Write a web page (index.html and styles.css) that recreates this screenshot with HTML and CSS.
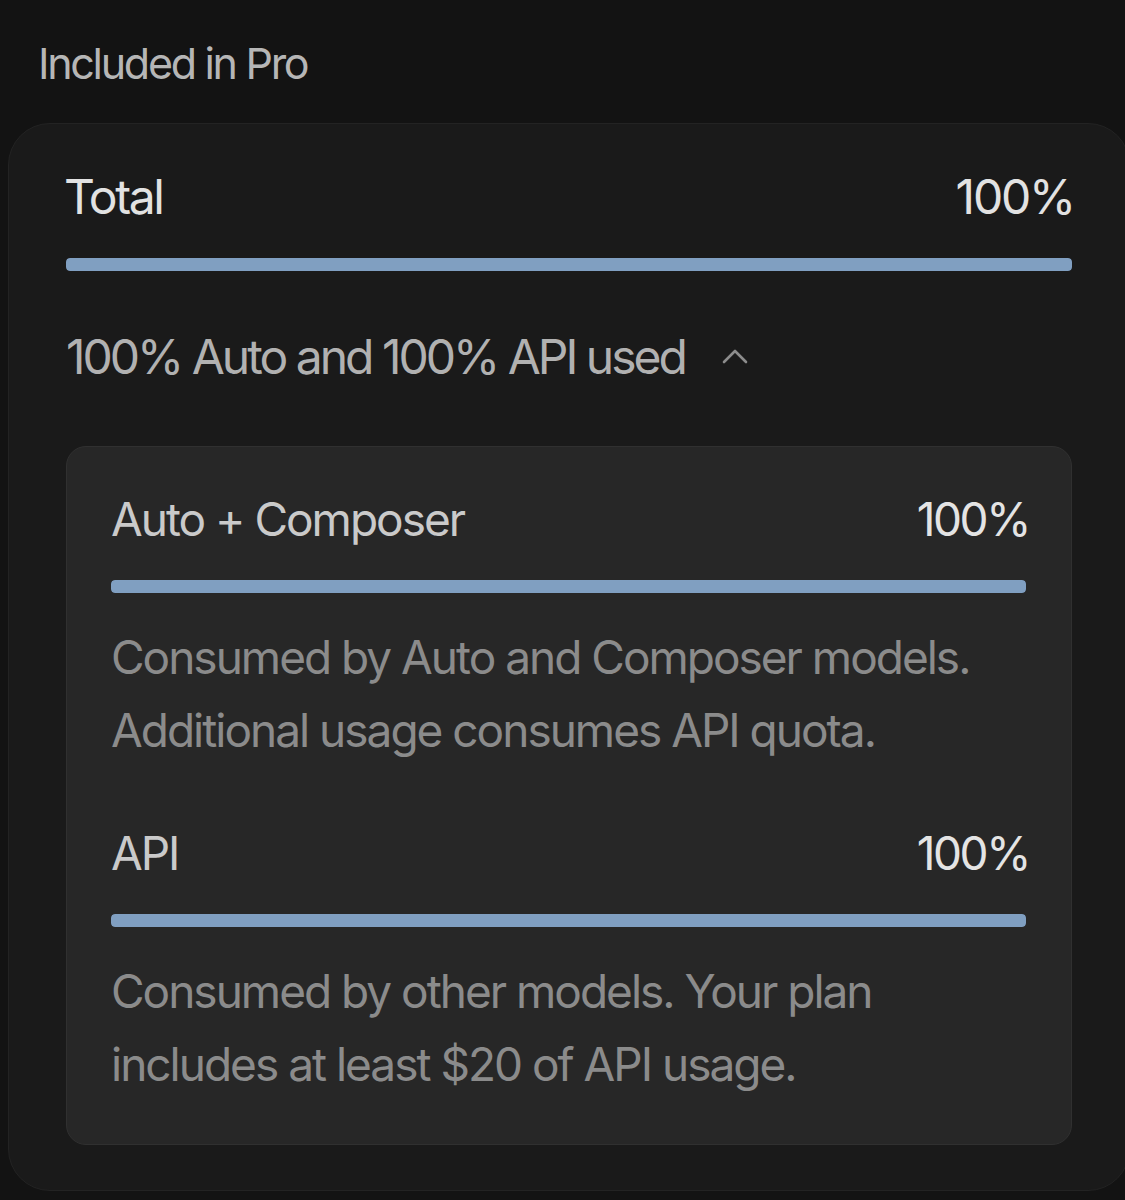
FILE: index.html
```html
<!DOCTYPE html>
<html lang="en">
<head>
<meta charset="utf-8">
<title>Included in Pro</title>
<link rel="stylesheet" href="styles.css">
</head>
<body>
<main class="page">
  <h2 class="section-title">Included in Pro</h2>
  <section class="card">
    <div class="row row-total">
      <span class="row-label">Total</span>
      <span class="row-value">100%</span>
    </div>
    <div class="bar"><div class="bar-fill" style="width:100%"></div></div>
    <button class="summary" type="button">
      <span>100% Auto and 100% API used</span>
      <svg class="chevron" width="26" height="16" viewBox="0 0 26 16" aria-hidden="true">
        <path d="M2 14 L13 3 L24 14" fill="none" stroke="#8c8c8c" stroke-width="2.6" stroke-linecap="round" stroke-linejoin="round"/>
      </svg>
    </button>
    <div class="detail">
      <div class="row row-sub">
        <span class="row-label">Auto + Composer</span>
        <span class="row-value">100%</span>
      </div>
      <div class="bar"><div class="bar-fill" style="width:100%"></div></div>
      <p class="desc">Consumed by Auto and Composer models.<br>Additional usage consumes API quota.</p>
      <div class="row row-sub row-api">
        <span class="row-label">API</span>
        <span class="row-value">100%</span>
      </div>
      <div class="bar"><div class="bar-fill" style="width:100%"></div></div>
      <p class="desc">Consumed by other models. Your plan<br>includes at least $20 of API usage.</p>
    </div>
  </section>
</main>
</body>
</html>
```
FILE: styles.css
```css
html, body {
  margin: 0;
  padding: 0;
  background: #131313;
  overflow: hidden;
}
body {
  font-family: Inter, "Noto Sans", "Liberation Sans", sans-serif;
  font-weight: 380;
  -webkit-font-smoothing: antialiased;
}
.page {
  padding: 37px 0 0 8px;
  width: 1122px;
}
.section-title {
  margin: 0 0 34px 30px;
  font-size: 43px;
  line-height: 52px;
  font-weight: 380;
  color: #b6b6b6;
  letter-spacing: -2.3px;
}
.card {
  box-sizing: border-box;
  width: 1122px;
  background: #1a1a1a;
  border: 1px solid #232323;
  border-radius: 42px;
  padding: 44px 57px 45px 57px;
  display: flex;
  flex-direction: column;
}
.row {
  display: flex;
  justify-content: space-between;
  align-items: baseline;
}
.row-total {
  font-size: 48px;
  line-height: 58px;
  color: #e2e2e2;
  letter-spacing: -2.4px;
}
.row-total .row-label {
  margin-left: -2px;
}
.row-total .row-value {
  margin-right: -2px;
  letter-spacing: -2.2px;
}
.bar {
  height: 13px;
  border-radius: 4px;
  background: #2e3640;
  overflow: hidden;
  margin-top: 32px;
}
.bar-fill {
  height: 100%;
  background: #809fc1;
  border-radius: 4px;
}
.summary {
  all: unset;
  display: flex;
  align-items: center;
  gap: 37px;
  margin-top: 57px;
  font-family: Inter, "Noto Sans", "Liberation Sans", sans-serif;
  font-weight: 380;
  font-size: 48px;
  line-height: 58px;
  color: #b1b1b1;
  letter-spacing: -3.0px;
  cursor: pointer;
}
.chevron {
  display: block;
  margin-top: -2px;
}
.detail {
  margin-top: 60px;
  background: #272727;
  border: 1px solid #303030;
  border-radius: 20px;
  padding: 44px 45px 43px 44px;
  display: flex;
  flex-direction: column;
}
.row-sub {
  font-size: 46px;
  line-height: 56px;
  color: #cacaca;
  letter-spacing: -2.0px;
}
.row-sub .row-value {
  color: #e4e4e4;
  letter-spacing: -2.4px;
  margin-right: -3px;
}
.detail .bar {
  margin-top: 33px;
}
.desc {
  margin: 28px 0 0 0;
  font-size: 46px;
  line-height: 73px;
  color: #8b8b8b;
  letter-spacing: -2.0px;
}
.row-api {
  margin-top: 58px;
}
```
